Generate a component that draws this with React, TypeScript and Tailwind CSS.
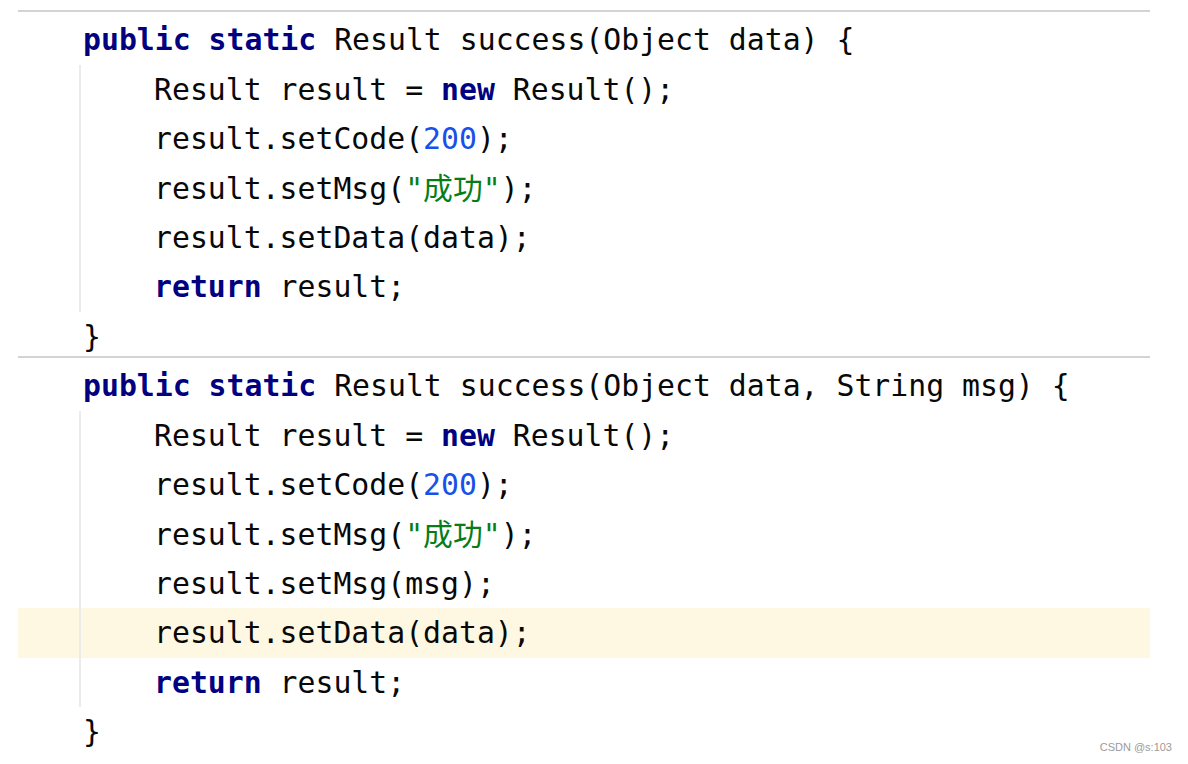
type Kind = 'p' | 'k' | 'n' | 's';
type Tok = [string, Kind];

interface Line {
  toks: Tok[];
  indent?: boolean;
  active?: boolean;
}

const KIND_CLASS: Record<Kind, string> = {
  p: 'text-[#080808]',
  k: 'text-[#000080] font-bold',
  n: 'text-[#1750eb]',
  s: 'text-[#067d17]',
};

const setCode: Tok[] = [['result.setCode(', 'p'], ['200', 'n'], [');', 'p']];
const setMsg: Tok[] = [['result.setMsg(', 'p'], ['"成功"', 's'], [');', 'p']];
const newResult: Tok[] = [['Result result = ', 'p'], ['new', 'k'], [' Result();', 'p']];
const ret: Tok[] = [['return', 'k'], [' result;', 'p']];

const FIRST: Line[] = [
  { toks: [['public', 'k'], [' ', 'p'], ['static', 'k'], [' Result success(Object data) {', 'p']] },
  { toks: newResult, indent: true },
  { toks: setCode, indent: true },
  { toks: setMsg, indent: true },
  { toks: [['result.setData(data);', 'p']], indent: true },
  { toks: ret, indent: true },
  { toks: [['}', 'p']] },
];

const SECOND: Line[] = [
  { toks: [['public', 'k'], [' ', 'p'], ['static', 'k'], [' Result success(Object data, String msg) {', 'p']] },
  { toks: newResult, indent: true },
  { toks: setCode, indent: true },
  { toks: setMsg, indent: true },
  { toks: [['result.setMsg(msg);', 'p']], indent: true },
  { toks: [['result.setData(data);', 'p']], indent: true, active: true },
  { toks: ret, indent: true },
  { toks: [['}', 'p']] },
];

function Code({ line }: { line: Line }) {
  return (
    <span className="whitespace-pre">
      {line.toks.map(([text, kind], i) => (
        <span key={i} className={KIND_CLASS[kind]}>{text}</span>
      ))}
    </span>
  );
}

function Row({ line }: { line: Line }) {
  return (
    <div className={`h-[49.43px] leading-[49.43px] pl-[61px] ${line.active ? 'bg-[#fef8e2]' : ''}`}>
      {line.indent ? (
        <div className="h-full border-l-2 border-[#ebebeb] pl-[73px]">
          <Code line={line} />
        </div>
      ) : (
        <div className="h-full pl-[4px]">
          <Code line={line} />
        </div>
      )}
    </div>
  );
}

export default function App() {
  return (
    <div className="relative w-[1188px] h-[764px] bg-white overflow-hidden">
      <div
        className="ml-[18px] w-[1132px] pt-[10px] text-[29.8px]"
        style={{ fontFamily: '"DejaVu Sans Mono", "Noto Sans CJK SC", monospace' }}
      >
        {/* 方法分隔线 */}
        <div className="h-[2px] bg-[#d4d4d4] mb-[3.3px]" />
        {FIRST.map((l, i) => <Row key={i} line={l} />)}
        <div className="h-[2px] bg-[#d4d4d4] -mt-[5.4px] mb-[3.4px]" />
        {SECOND.map((l, i) => <Row key={i} line={l} />)}
      </div>

      {/* 水印 */}
      <div className="absolute right-[16px] bottom-[9px] text-[11px] text-[#9a9a9a] font-['Liberation_Sans',sans-serif]">
        CSDN @s:103
      </div>
    </div>
  );
}
